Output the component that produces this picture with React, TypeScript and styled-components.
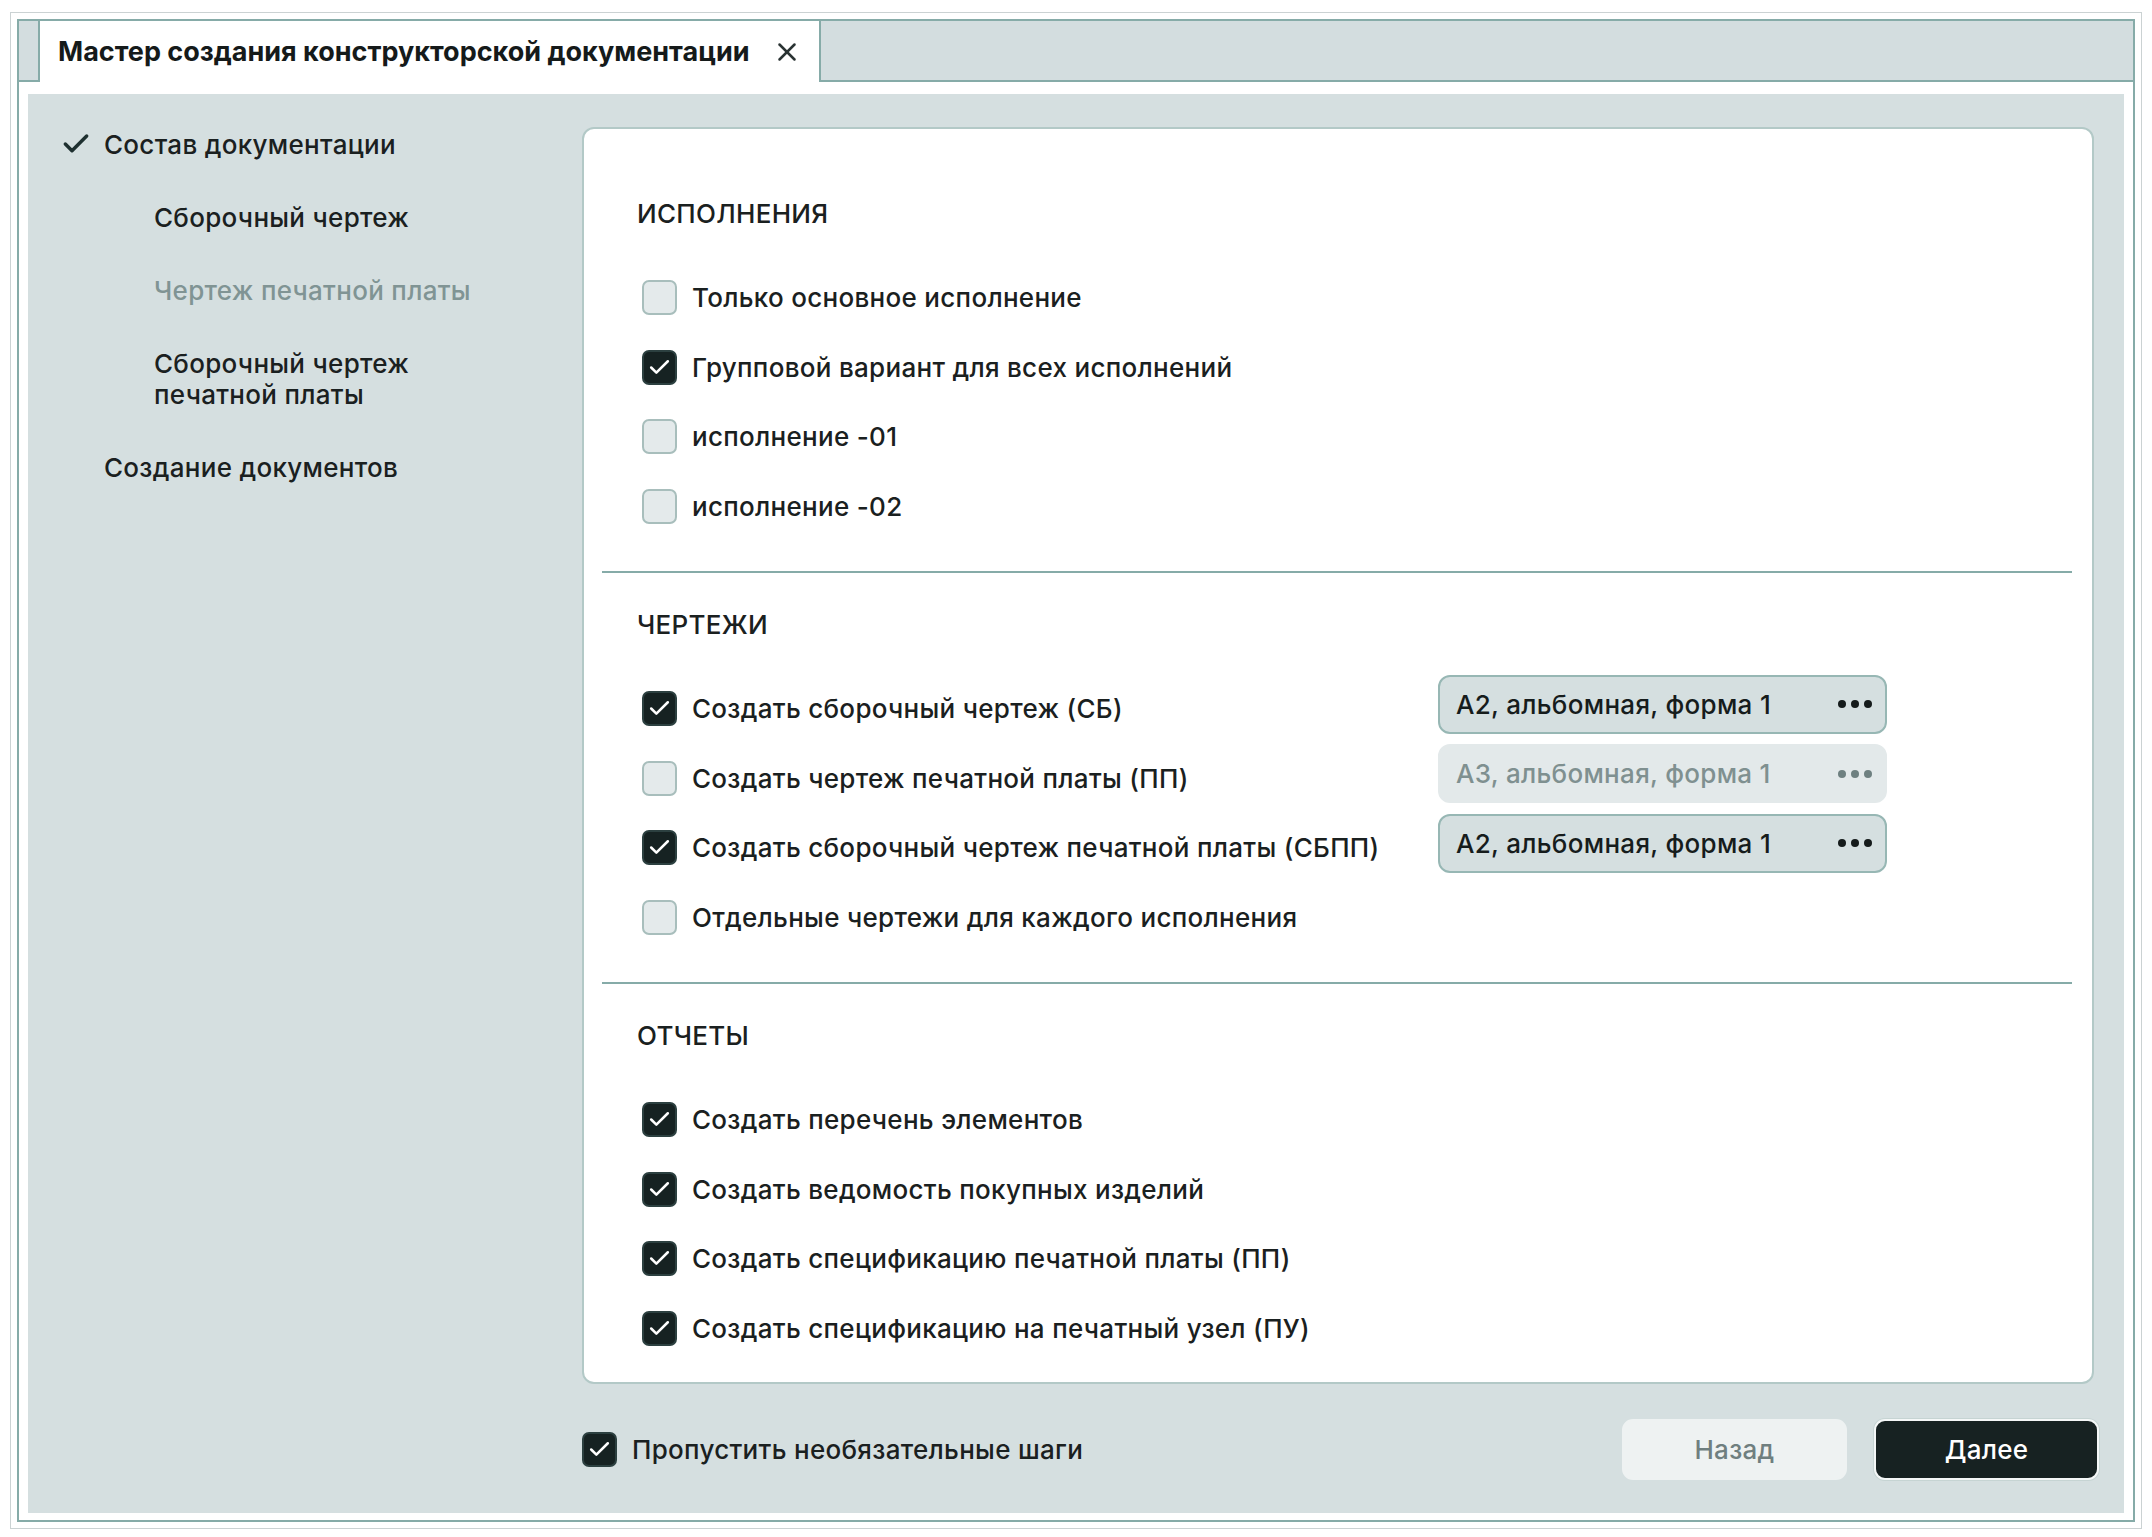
import React from "react";
import styled, { createGlobalStyle } from "styled-components";
import { Check, X } from "lucide-react";

const GlobalStyle = createGlobalStyle`
  html, body {
    margin: 0;
    padding: 0;
    background: #ffffff;
  }
  body {
    font-family: Inter, "Noto Sans", "Liberation Sans", sans-serif;
    color: #1b2121;
    -webkit-font-smoothing: antialiased;
  }
`;

const TEAL = "#86aba8";
const PANEL = "#d5dfe0";
const DARK = "#162222";

const OuterFrame = styled.div`
  box-sizing: border-box;
  margin: 12px 0 0 10px;
  width: 2132px;
  height: 1517px;
  border: 1px solid #cbd2d3;
  padding: 6px;
`;

const Window = styled.div`
  box-sizing: border-box;
  height: 100%;
  border: 2px solid ${TEAL};
  display: flex;
  flex-direction: column;
`;

const TabBar = styled.div`
  box-sizing: border-box;
  height: 61px;
  display: flex;
  background: #d3dddf;
  border-bottom: 2px solid ${TEAL};
`;

const TabStub = styled.div`
  width: 19px;
`;

const Tab = styled.div`
  box-sizing: border-box;
  width: 783px;
  height: 61px;
  background: #ffffff;
  border-left: 2px solid ${TEAL};
  border-right: 2px solid ${TEAL};
  display: flex;
  align-items: center;
  padding-left: 18px;
  gap: 22px;
`;

const TabTitle = styled.span`
  font-size: 27px;
  font-weight: 700;
  color: #151a1a;
  white-space: nowrap;
`;

const CloseButton = styled.span`
  display: flex;
  align-items: center;
  color: #2a3333;
`;

const Body = styled.div`
  flex: 1;
  display: flex;
  padding: 12px 9px 10px 9px;
`;

const Panel = styled.div`
  flex: 1;
  display: flex;
  background: ${PANEL};
`;

const Nav = styled.div`
  box-sizing: border-box;
  width: 554px;
  padding: 35px 0 0 36px;
  display: flex;
  flex-direction: column;
  gap: 42px;
`;

const NavItem = styled.div<{ $level: number; $muted?: boolean }>`
  display: flex;
  align-items: flex-start;
  padding-left: ${({ $level }) => ($level === 2 ? 90 : 40)}px;
  position: relative;
  font-size: 26px;
  font-weight: 500;
  letter-spacing: 0.3px;
  line-height: 31px;
  color: ${({ $muted }) => ($muted ? "#809494" : "#1a2020")};
`;

const NavCheck = styled.span`
  position: absolute;
  left: -4px;
  top: -1px;
  color: #1e3030;
  display: flex;
`;

const Main = styled.div`
  flex: 1;
  display: flex;
  flex-direction: column;
  padding: 33px 30px 33px 0;
  gap: 35px;
`;

const Card = styled.div`
  flex: 1;
  box-sizing: border-box;
  background: #ffffff;
  border: 2px solid #b3c9c7;
  border-radius: 12px;
  padding: 0 20px 0 18px;
  display: flex;
  flex-direction: column;
`;

const Section = styled.section<{ $first?: boolean; $last?: boolean }>`
  padding: ${({ $first }) => ($first ? 70 : 37)}px 0
    ${({ $last }) => ($last ? 19 : 30)}px 35px;
  border-bottom: ${({ $last }) => ($last ? "none" : `2px solid ${TEAL}`)};
`;

const SectionTitle = styled.h3`
  margin: 0 0 34px 0;
  font-size: 26px;
  font-weight: 500;
  letter-spacing: 0.3px;
  line-height: 30px;
  color: #1a2020;
`;

const Row = styled.div`
  display: grid;
  grid-template-columns: 796px 449px;
  align-items: center;
  height: 69.5px;
  padding-left: 5px;
`;

const OptionLabel = styled.label`
  display: flex;
  align-items: center;
  gap: 15px;
  font-size: 26px;
  font-weight: 500;
  letter-spacing: 0.3px;
  color: #1a2020;
  white-space: nowrap;
`;

const Box = styled.span<{ $checked?: boolean }>`
  box-sizing: border-box;
  width: 35px;
  height: 35px;
  flex: 0 0 35px;
  border-radius: 7px;
  display: flex;
  align-items: center;
  justify-content: center;
  background: ${({ $checked }) => ($checked ? DARK : "#e4eaeb")};
  border: 2px solid ${({ $checked }) => ($checked ? "#2c4040" : "#a8bebc")};
  color: #ffffff;
`;

const FormatPicker = styled.div<{ $disabled?: boolean }>`
  box-sizing: border-box;
  height: 59px;
  margin-bottom: 9px;
  display: flex;
  align-items: center;
  justify-content: space-between;
  padding: 0 13px 0 16px;
  border-radius: 12px;
  background: ${({ $disabled }) => ($disabled ? "#e3e9ea" : PANEL)};
  border: 2px solid ${({ $disabled }) => ($disabled ? "#e3e9ea" : "#97b7b4")};
  font-size: 26px;
  font-weight: 500;
  letter-spacing: 0.3px;
  color: ${({ $disabled }) => ($disabled ? "#7f9090" : "#161c1c")};
`;

const Dots = styled.span<{ $disabled?: boolean }>`
  display: flex;
  gap: 5px;

  i {
    width: 8px;
    height: 8px;
    border-radius: 50%;
    background: ${({ $disabled }) => ($disabled ? "#6e8080" : "#151b1b")};
  }
`;

const Footer = styled.div`
  height: 61px;
  display: flex;
  align-items: center;
`;

const FooterOption = styled(OptionLabel)`
  flex: 1;
`;

const Buttons = styled.div`
  display: flex;
  gap: 27px;
  margin-right: -5px;
`;

const Button = styled.button<{ $primary?: boolean }>`
  box-sizing: border-box;
  width: 225px;
  height: 61px;
  border-radius: 11px;
  font-family: inherit;
  font-size: 26px;
  font-weight: 500;
  letter-spacing: 0.3px;
  cursor: pointer;
  background: ${({ $primary }) => ($primary ? "#172222" : "#eef2f2")};
  color: ${({ $primary }) => ($primary ? "#ffffff" : "#6f7f7f")};
  border: 2px solid ${({ $primary }) => ($primary ? "#f4f7f7" : "#eef2f2")};
  box-shadow: ${({ $primary }) => ($primary ? "0 0 0 1px #c6d4d3" : "none")};
`;

type Option = {
  label: string;
  checked?: boolean;
  format?: { text: string; disabled?: boolean };
};

const sections: { title: string; options: Option[] }[] = [
  {
    title: "ИСПОЛНЕНИЯ",
    options: [
      { label: "Только основное исполнение" },
      { label: "Групповой вариант для всех исполнений", checked: true },
      { label: "исполнение -01" },
      { label: "исполнение -02" },
    ],
  },
  {
    title: "ЧЕРТЕЖИ",
    options: [
      { label: "Создать сборочный чертеж (СБ)", checked: true, format: { text: "А2, альбомная, форма 1" } },
      { label: "Создать чертеж печатной платы (ПП)", format: { text: "А3, альбомная, форма 1", disabled: true } },
      {
        label: "Создать сборочный чертеж печатной платы (СБПП)",
        checked: true,
        format: { text: "А2, альбомная, форма 1" },
      },
      { label: "Отдельные чертежи для каждого исполнения" },
    ],
  },
  {
    title: "ОТЧЕТЫ",
    options: [
      { label: "Создать перечень элементов", checked: true },
      { label: "Создать ведомость покупных изделий", checked: true },
      { label: "Создать спецификацию печатной платы (ПП)", checked: true },
      { label: "Создать спецификацию на печатный узел (ПУ)", checked: true },
    ],
  },
];

function CheckBox({ checked }: { checked?: boolean }) {
  return (
    <Box $checked={checked}>
      {checked && <Check size={25} strokeWidth={2.4} />}
    </Box>
  );
}

export default function App() {
  return (
    <>
      <GlobalStyle />
      <OuterFrame>
        <Window>
          <TabBar>
            <TabStub />
            <Tab>
              <TabTitle>Мастер создания конструкторской документации</TabTitle>
              <CloseButton>
                <X size={30} strokeWidth={2} />
              </CloseButton>
            </Tab>
          </TabBar>
          <Body>
            <Panel>
              <Nav>
                <NavItem $level={1}>
                  <NavCheck>
                    <Check size={32} strokeWidth={2.6} />
                  </NavCheck>
                  Состав документации
                </NavItem>
                <NavItem $level={2}>Сборочный чертеж</NavItem>
                <NavItem $level={2} $muted>
                  Чертеж печатной платы
                </NavItem>
                <NavItem $level={2}>
                  Сборочный чертеж
                  <br />
                  печатной платы
                </NavItem>
                <NavItem $level={1}>Создание документов</NavItem>
              </Nav>
              <Main>
                <Card>
                  {sections.map((s, i) => (
                    <Section key={s.title} $first={i === 0} $last={i === sections.length - 1}>
                      <SectionTitle>{s.title}</SectionTitle>
                      {s.options.map((o) => (
                        <Row key={o.label}>
                          <OptionLabel>
                            <CheckBox checked={o.checked} />
                            {o.label}
                          </OptionLabel>
                          {o.format && (
                            <FormatPicker $disabled={o.format.disabled}>
                              {o.format.text}
                              <Dots $disabled={o.format.disabled}>
                                <i />
                                <i />
                                <i />
                              </Dots>
                            </FormatPicker>
                          )}
                        </Row>
                      ))}
                    </Section>
                  ))}
                </Card>
                <Footer>
                  <FooterOption>
                    <CheckBox checked />
                    Пропустить необязательные шаги
                  </FooterOption>
                  <Buttons>
                    <Button>Назад</Button>
                    <Button $primary>Далее</Button>
                  </Buttons>
                </Footer>
              </Main>
            </Panel>
          </Body>
        </Window>
      </OuterFrame>
    </>
  );
}
